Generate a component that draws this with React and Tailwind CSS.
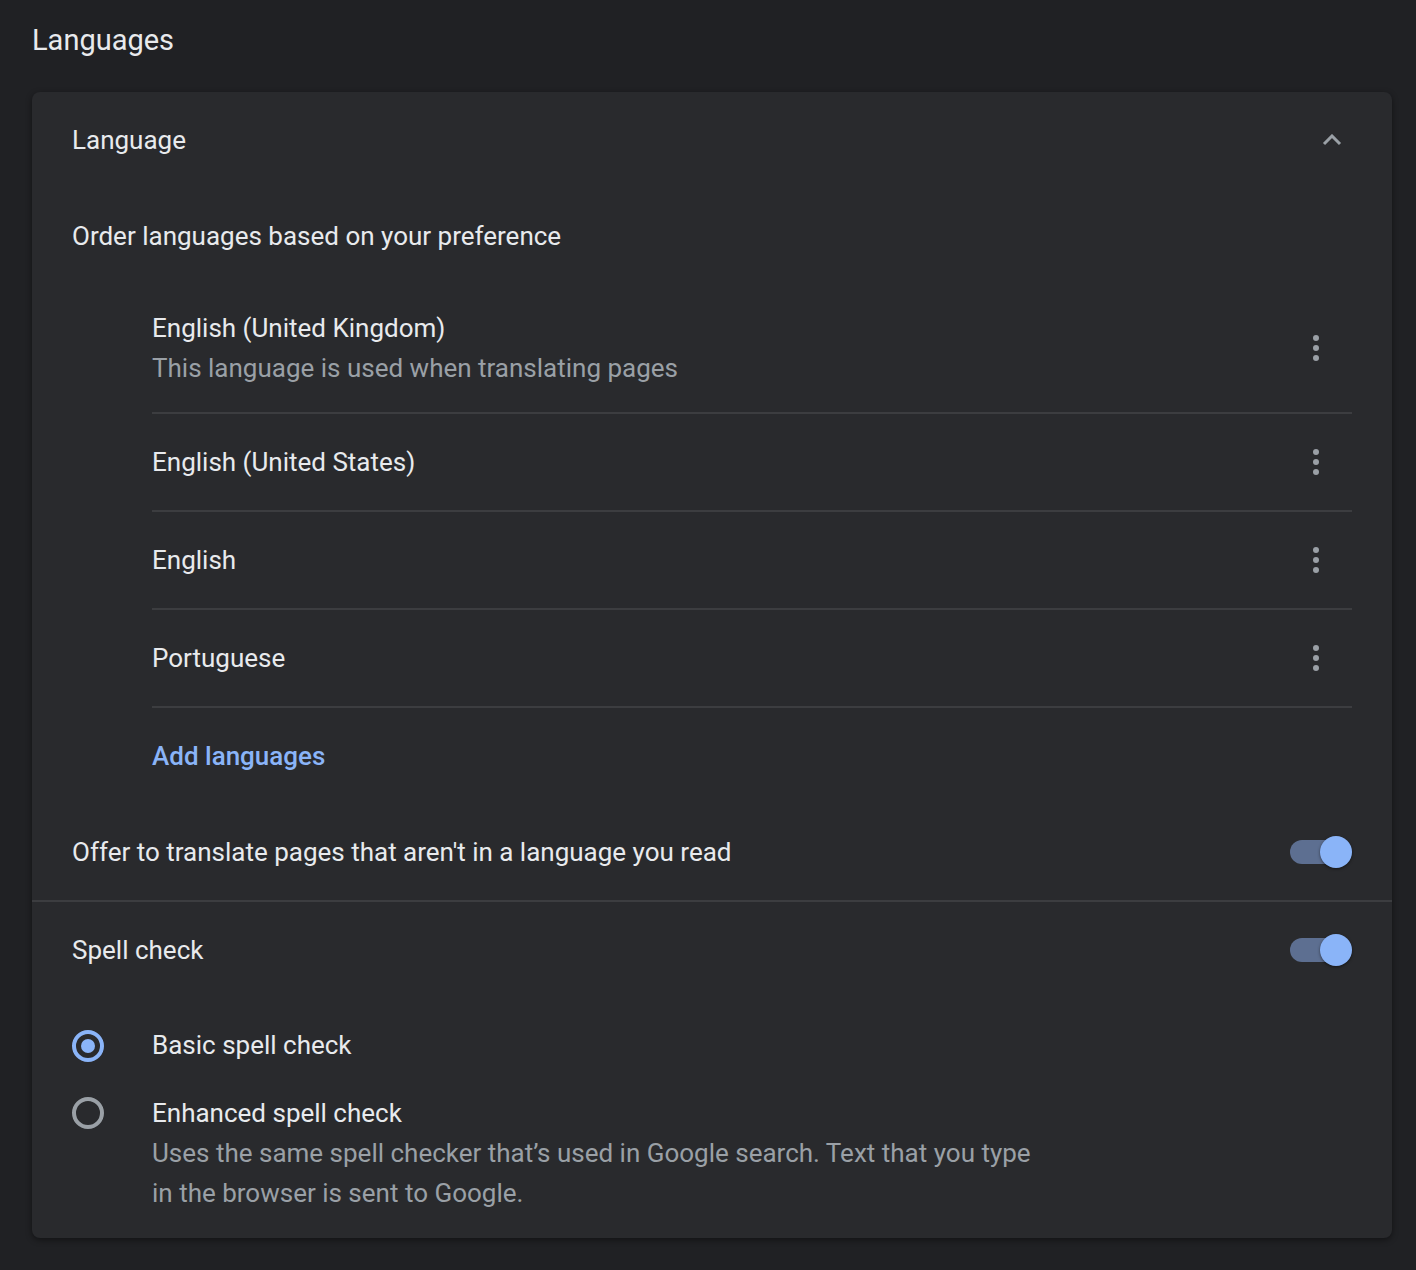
import React from "react";

function Dots() {
  return (
    <div className="flex h-[72px] w-[72px] flex-col items-center justify-center gap-[4px]">
      <span className="h-[6px] w-[6px] rounded-full bg-[#9aa0a6]" />
      <span className="h-[6px] w-[6px] rounded-full bg-[#9aa0a6]" />
      <span className="h-[6px] w-[6px] rounded-full bg-[#9aa0a6]" />
    </div>
  );
}

function Toggle() {
  return (
    <div className="relative h-[32px] w-[62px]">
      <div className="absolute left-0 top-[4px] h-[24px] w-[56px] rounded-full bg-[#5d6f91]" />
      <div className="absolute right-0 top-0 h-[32px] w-[32px] rounded-full bg-[#8ab4f8] shadow-[0_1px_3px_rgba(0,0,0,0.5)]" />
    </div>
  );
}

function LangRow({ title, sub }) {
  return (
    <div
      className={`flex items-center justify-between border-b-2 border-[#3c3d40] ${
        sub ? "h-[130px]" : "h-[98px]"
      }`}
    >
      <div className="flex flex-col">
        <span className="leading-[40px] text-[#e8eaed]">{title}</span>
        {sub && <span className="leading-[40px] text-[#9aa0a6]">{sub}</span>}
      </div>
      <Dots />
    </div>
  );
}

export default function App() {
  return (
    <div
      className="min-h-screen w-full bg-[#202124] pb-8 text-[26px] text-[#e8eaed]"
      style={{ fontFamily: "Roboto, 'Noto Sans', Arial, sans-serif" }}
    >
      <h1 className="pl-8 pt-[22px] text-[29px] font-normal leading-[36px] text-[#e8eaed]">
        Languages
      </h1>
      <div className="ml-8 mr-6 mt-[34px] overflow-hidden rounded-[8px] bg-[#292a2d] shadow-[0_2px_6px_rgba(0,0,0,0.45)]">
        <div className="px-10">
          <div className="flex h-[96px] items-center justify-between">
            <span>Language</span>
            <svg width="20" height="12" viewBox="0 0 20 12" className="mr-[10px]">
              <path d="M2 10 L10 2 L18 10" fill="none" stroke="#9aa0a6" strokeWidth="3" />
            </svg>
          </div>
          <div className="flex h-[96px] items-center">
            <span>Order languages based on your preference</span>
          </div>
          <div className="pl-20">
            <LangRow title="English (United Kingdom)" sub="This language is used when translating pages" />
            <LangRow title="English (United States)" />
            <LangRow title="English" />
            <LangRow title="Portuguese" />
            <div className="flex h-[96px] items-center">
              <span className="font-medium text-[#8ab4f8]">Add languages</span>
            </div>
          </div>
          <div className="flex h-[96px] items-center justify-between">
            <span>Offer to translate pages that aren't in a language you read</span>
            <Toggle />
          </div>
        </div>
        <div className="h-[2px] w-full bg-[#3c3d40]" />
        <div className="px-10 pb-[25px]">
          <div className="flex h-[96px] items-center justify-between">
            <span>Spell check</span>
            <Toggle />
          </div>
          <div className="flex h-[95px] items-center">
            <div className="flex w-20 items-center">
              <div className="flex h-[32px] w-[32px] items-center justify-center rounded-full border-[4px] border-[#8ab4f8]">
                <div className="h-[14px] w-[14px] rounded-full bg-[#8ab4f8]" />
              </div>
            </div>
            <span>Basic spell check</span>
          </div>
          <div className="flex">
            <div className="flex h-[40px] w-20 items-center">
              <div className="h-[32px] w-[32px] rounded-full border-[4px] border-[#9aa0a6]" />
            </div>
            <div className="flex flex-col">
              <span className="leading-[40px]">Enhanced spell check</span>
              <span className="leading-[40px] text-[#9aa0a6]">
                Uses the same spell checker that’s used in Google search. Text that you type
                <br />
                in the browser is sent to Google.
              </span>
            </div>
          </div>
        </div>
      </div>
    </div>
  );
}
